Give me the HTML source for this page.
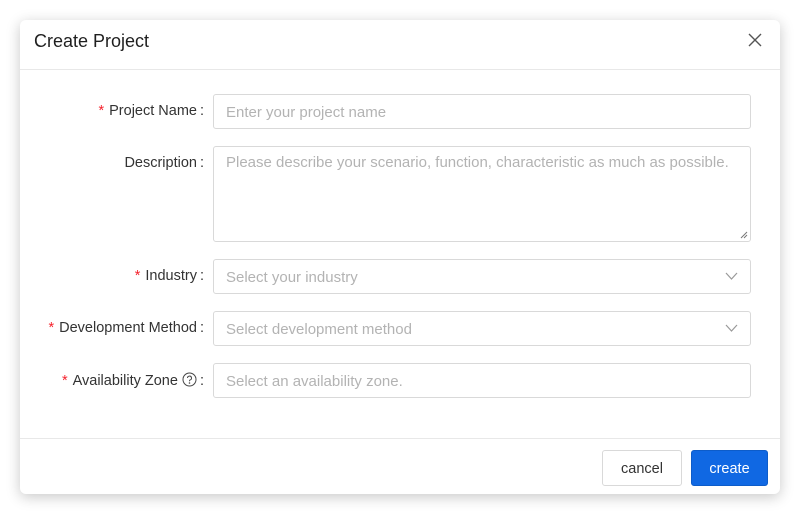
<!DOCTYPE html>
<html><head><style>
body{margin:0;width:800px;height:515px;background:#fff;font-family:"Liberation Sans",sans-serif;position:relative;overflow:hidden}
.dlg{position:absolute;left:20px;top:20px;width:760px;height:474px;background:#fff;border-radius:6px;box-shadow:0 3px 14px rgba(0,0,0,.22)}
.hd{height:50px;border-bottom:1px solid #e8e8e8;box-sizing:border-box}
.title{position:absolute;left:14px;top:11px;font-size:18px;color:#1f1f1f}
.x{position:absolute;left:728px;top:13px}
.lab{position:absolute;right:576px;font-size:14.5px;color:#333;white-space:nowrap}
.lab b{color:#f5222d;font-weight:normal;margin-right:5px}
.lab i{font-style:normal;margin-left:3px}
.inp{position:absolute;left:193px;width:538px;height:35px;border:1px solid #d9d9d9;border-radius:3px;box-sizing:border-box;font-size:15px;color:#b3b3b3;padding:9px 12px 0}
.chev{position:absolute;right:12px;top:11px}
.ft{position:absolute;left:0;top:418px;width:760px;border-top:1px solid #e8e8e8}
.btn{position:absolute;top:430px;height:36px;border-radius:3px;box-sizing:border-box;font-size:14.5px;text-align:center;line-height:36px}
</style></head><body>
<div class="dlg">
<div class="hd"></div>
<div class="title">Create Project</div>
<svg class="x" width="14" height="14" viewBox="0 0 14 14"><path d="M1 1L13 13M13 1L1 13" stroke="#555" stroke-width="1.4"/></svg>

<div class="lab" style="top:83px"><b>*</b>Project Name<i>:</i></div>
<div class="inp" style="top:74px">Enter your project name</div>

<div class="lab" style="top:135px">Description<i>:</i></div>
<div class="inp" style="top:126px;height:96px;padding-top:7px">Please describe your scenario, function, characteristic as much as possible.
<svg style="position:absolute;right:2px;bottom:2px" width="8" height="8"><path d="M7 1L1 7M7 4L4 7" stroke="#777"/></svg></div>

<div class="lab" style="top:248px"><b>*</b>Industry<i>:</i></div>
<div class="inp" style="top:239px">Select your industry<svg class="chev" width="13" height="10"><path d="M1 2L6.5 8L12 2" stroke="#999" fill="none" stroke-width="1.2"/></svg></div>

<div class="lab" style="top:300px"><b>*</b>Development Method<i>:</i></div>
<div class="inp" style="top:291px">Select development method<svg class="chev" width="13" height="10"><path d="M1 2L6.5 8L12 2" stroke="#999" fill="none" stroke-width="1.2"/></svg></div>

<div class="lab" style="top:352px"><b>*</b>Availability Zone <svg width="15" height="15" viewBox="0 0 15 15" style="vertical-align:-2px"><circle cx="7.5" cy="7.5" r="6.5" stroke="#444" fill="none"/><path d="M5.5 6a2 2 0 1 1 2.5 2c-.5.2-.5.6-.5 1.2" stroke="#444" fill="none"/><circle cx="7.5" cy="11" r=".8" fill="#444"/></svg><i>:</i></div>
<div class="inp" style="top:343px">Select an availability zone.</div>

<div class="ft"></div>
<div class="btn" style="left:582px;width:80px;border:1px solid #d9d9d9;color:#333">cancel</div>
<div class="btn" style="left:671px;width:77px;background:#1068e3;color:#fff;border:1px solid #0d5cc9">create</div>
</div>
</body></html>
